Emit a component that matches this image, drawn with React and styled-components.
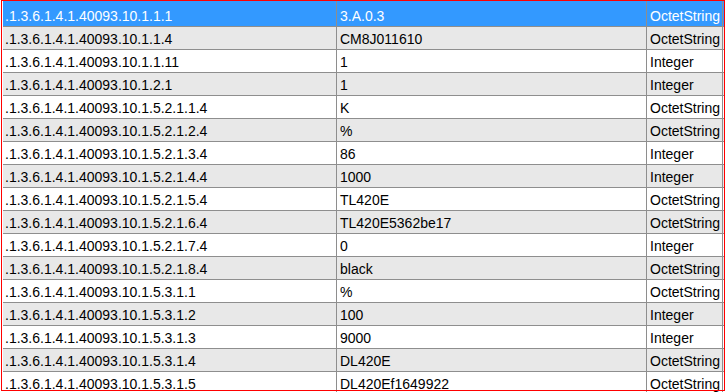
import React from "react";
import styled, { createGlobalStyle } from "styled-components";

const Global = createGlobalStyle`
  html, body { margin: 0; padding: 0; background: #ffffff; }
  #root { width: 726px; height: 392px; }
`;

const Frame = styled.div`
  position: relative;
  width: 726px;
  height: 392px;
  overflow: hidden;
  background: #ffffff;
  font-family: "Liberation Sans", Arial, sans-serif;
  font-size: 14px;
`;

const Table = styled.div`
  display: flex;
  flex-direction: column;
  padding: 1px 0 0 3px;
`;

const Row = styled.div`
  display: flex;
  width: 721px;
  height: ${(p) => (p.$first ? 25 : 22)}px;
  border-bottom: 1px solid #8e8e8e;
  background: ${(p) => (p.$selected ? "#3399ff" : p.$alt ? "#e8e8e8" : "#ffffff")};
  color: ${(p) => (p.$selected ? "#ffffff" : "#000000")};
  flex: none;
`;

const Cell = styled.div`
  box-sizing: border-box;
  width: ${(p) => p.$w}px;
  flex: none;
  padding: ${(p) => (p.$first ? 3 : 0)}px 0 0 ${(p) => p.$pad}px;
  line-height: 24px;
  white-space: nowrap;
  overflow: hidden;
  border-right: 1px solid #8e8e8e;
`;

const FocusRing = styled.div`
  position: absolute;
  left: 1px;
  top: 0;
  width: 724px;
  height: 391px;
  box-sizing: border-box;
  border: 1px solid #ff0000;
  pointer-events: none;
`;

const P = ".1.3.6.1.4.1.40093.10.";
const rows = [
  ["1.1.1", "3.A.0.3", "OctetString"],
  ["1.1.4", "CM8J011610", "OctetString"],
  ["1.1.11", "1", "Integer"],
  ["1.2.1", "1", "Integer"],
  ["1.5.2.1.1.4", "K", "OctetString"],
  ["1.5.2.1.2.4", "%", "OctetString"],
  ["1.5.2.1.3.4", "86", "Integer"],
  ["1.5.2.1.4.4", "1000", "Integer"],
  ["1.5.2.1.5.4", "TL420E", "OctetString"],
  ["1.5.2.1.6.4", "TL420E5362be17", "OctetString"],
  ["1.5.2.1.7.4", "0", "Integer"],
  ["1.5.2.1.8.4", "black", "OctetString"],
  ["1.5.3.1.1", "%", "OctetString"],
  ["1.5.3.1.2", "100", "Integer"],
  ["1.5.3.1.3", "9000", "Integer"],
  ["1.5.3.1.4", "DL420E", "OctetString"],
  ["1.5.3.1.5", "DL420Ef1649922", "OctetString"],
];

export default function App() {
  return (
    <>
      <Global />
      <Frame>
        <Table>
          {rows.map(([oid, val, type], i) => (
            <Row key={i} $first={i === 0} $selected={i === 0} $alt={i % 2 === 1}>
              <Cell $w={334} $pad={2} $first={i === 0}>{P + oid}</Cell>
              <Cell $w={310} $pad={3} $first={i === 0}>{val}</Cell>
              <Cell $w={76} $pad={3} $first={i === 0}>{type}</Cell>
            </Row>
          ))}
        </Table>
        <FocusRing />
      </Frame>
    </>
  );
}
